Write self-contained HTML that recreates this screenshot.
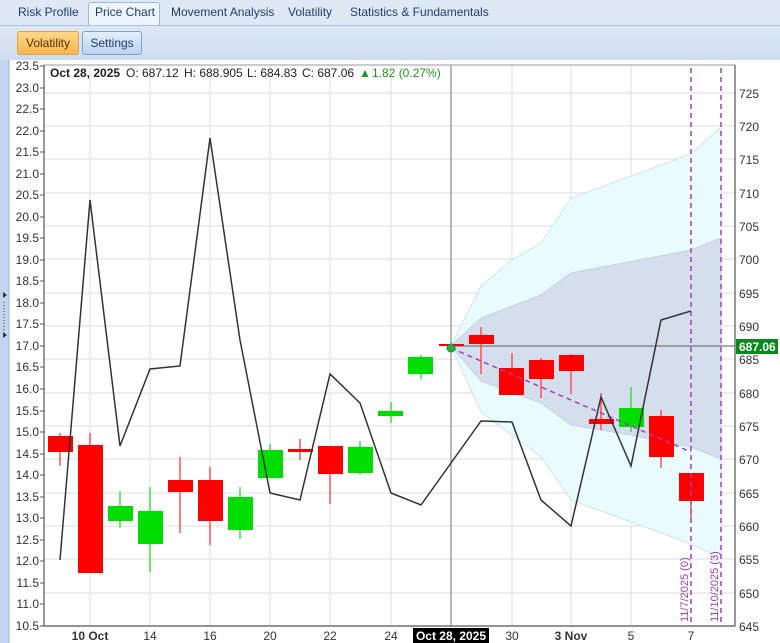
<!DOCTYPE html>
<html><head><meta charset="utf-8"><style>
body{margin:0;width:780px;height:643px;overflow:hidden;background:#dbe6f4;font-family:"Liberation Sans",sans-serif;}
.tabs{position:absolute;left:0;top:0;width:780px;height:26px;background:#dfe9f5;}
.tab{position:absolute;top:5px;font-size:12px;color:#1e3c6e;}
.tabsel{position:absolute;left:88px;top:2px;width:70px;height:25px;background:#eef4fb;border:1px solid #9db7d8;border-bottom:none;border-radius:3px 3px 0 0;}
.tool{position:absolute;left:0;top:25px;width:780px;height:35px;background:linear-gradient(#dde8f5,#cddcee);border-top:1px solid #a9c1df;}
.btn{position:absolute;top:31px;height:22px;font-size:12px;line-height:22px;text-align:center;border-radius:3px;}
</style></head><body>
<div class="tabs"></div>
<div class="tabsel"></div>
<div class="tab" style="left:18px">Risk Profile</div>
<div class="tab" style="left:95px">Price Chart</div>
<div class="tab" style="left:171px">Movement Analysis</div>
<div class="tab" style="left:288px">Volatility</div>
<div class="tab" style="left:350px">Statistics &amp; Fundamentals</div>
<div class="tool"></div>
<div class="btn" style="left:17px;width:60px;background:linear-gradient(#ffd98a,#f7b54f);border:1px solid #e0a050;color:#5a3000">Volatility</div>
<div class="btn" style="left:82px;width:58px;background:linear-gradient(#e3eefb,#bcd3f0);border:1px solid #7ea3d0;color:#1e3c6e">Settings</div>
<svg style="position:absolute;left:0;top:60px" width="780" height="583" viewBox="0 60 780 583" font-family="Liberation Sans, sans-serif">
<rect x="0" y="60" width="780" height="583" fill="#fff"/>
<rect x="0" y="60" width="9" height="583" fill="#c3d5ee"/>
<line x1="9" y1="60" x2="9" y2="643" stroke="#9bb6dc"/>
<path d="M3 292 l4 3 -4 3z M3 332 l4 3 -4 3z" fill="#334"/>
<line x1="4" y1="302" x2="4" y2="330" stroke="#334" stroke-dasharray="1 2"/>
<g stroke="#e4e4e4" stroke-width="1.2">
<line x1="44" y1="93" x2="735" y2="93"/><line x1="44" y1="126" x2="735" y2="126"/><line x1="44" y1="159" x2="735" y2="159"/><line x1="44" y1="193" x2="735" y2="193"/><line x1="44" y1="226" x2="735" y2="226"/><line x1="44" y1="259" x2="735" y2="259"/><line x1="44" y1="293" x2="735" y2="293"/><line x1="44" y1="326" x2="735" y2="326"/><line x1="44" y1="359" x2="735" y2="359"/><line x1="44" y1="393" x2="735" y2="393"/><line x1="44" y1="426" x2="735" y2="426"/><line x1="44" y1="459" x2="735" y2="459"/><line x1="44" y1="493" x2="735" y2="493"/><line x1="44" y1="526" x2="735" y2="526"/><line x1="44" y1="559" x2="735" y2="559"/><line x1="44" y1="593" x2="735" y2="593"/>
<line x1="90" y1="65" x2="90" y2="626"/><line x1="150" y1="65" x2="150" y2="626"/><line x1="210" y1="65" x2="210" y2="626"/><line x1="270" y1="65" x2="270" y2="626"/><line x1="330" y1="65" x2="330" y2="626"/><line x1="391" y1="65" x2="391" y2="626"/><line x1="512" y1="65" x2="512" y2="626"/><line x1="571" y1="65" x2="571" y2="626"/><line x1="631" y1="65" x2="631" y2="626"/>
</g>
<polygon points="451,346 481,286 512,260 541,243 571,198 691,154 721,127 721,558 691,544 631,522 571,500 541,457 481,412" fill="#e9fbfd" stroke="#cfe4f0"/>
<polygon points="451,346 481,318 541,295 571,273 691,250 721,238 721,459 691,447 631,435 571,425 541,403 481,381" fill="#d4deec" stroke="#c5d2e4"/>
<line x1="451" y1="65" x2="451" y2="626" stroke="#888" stroke-width="1.2"/>
<line x1="451" y1="346" x2="735" y2="346" stroke="#777" stroke-width="1.2"/>
<g stroke="#ff3b3b" stroke-width="1.3">
<line x1="60" y1="433" x2="60" y2="466"/><line x1="90" y1="433" x2="90" y2="573"/><line x1="180" y1="457" x2="180" y2="533"/><line x1="210" y1="467" x2="210" y2="545"/><line x1="300" y1="439" x2="300" y2="460"/><line x1="330" y1="446" x2="330" y2="504"/><line x1="481" y1="327" x2="481" y2="374"/><line x1="512" y1="353" x2="512" y2="395"/><line x1="541" y1="358" x2="541" y2="398"/><line x1="571" y1="354" x2="571" y2="394"/><line x1="601" y1="393" x2="601" y2="430"/><line x1="661" y1="410" x2="661" y2="468"/><line x1="691" y1="473" x2="691" y2="518"/>
</g>
<g stroke="#22dd22" stroke-width="1.3">
<line x1="120" y1="491" x2="120" y2="528"/><line x1="150" y1="487" x2="150" y2="572"/><line x1="240" y1="487" x2="240" y2="539"/><line x1="270" y1="444" x2="270" y2="478"/><line x1="360" y1="441" x2="360" y2="475"/><line x1="391" y1="402" x2="391" y2="423"/><line x1="421" y1="355" x2="421" y2="379"/><line x1="631" y1="387" x2="631" y2="432"/>
</g>
<g fill="#ff0000">
<rect x="48" y="436" width="25" height="16"/><rect x="78" y="445" width="25" height="128"/><rect x="168" y="480" width="25" height="12"/><rect x="198" y="480" width="25" height="41"/><rect x="288" y="449" width="25" height="3"/><rect x="318" y="446" width="25" height="28"/><rect x="439" y="344" width="25" height="2"/><rect x="469" y="335" width="25" height="9"/><rect x="499" y="368" width="25" height="27"/><rect x="529" y="360" width="25" height="19"/><rect x="559" y="355" width="25" height="16"/><rect x="589" y="419" width="25" height="5"/><rect x="649" y="416" width="25" height="41"/><rect x="679" y="473" width="25" height="28"/>
</g>
<g fill="#00dd00">
<rect x="108" y="506" width="25" height="15"/><rect x="138" y="511" width="25" height="33"/><rect x="228" y="497" width="25" height="33"/><rect x="258" y="450" width="25" height="28"/><rect x="348" y="447" width="25" height="26"/><rect x="378" y="411" width="25" height="5"/><rect x="408" y="357" width="25" height="17"/><rect x="619" y="408" width="25" height="19"/>
</g>
<line x1="451" y1="348" x2="691" y2="452" stroke="#a040b0" stroke-width="1.5" stroke-dasharray="5 4"/>
<circle cx="451" cy="348" r="4" fill="#3a3" stroke="#185"/>
<polyline points="60,560 90,200 120,446 150,369 180,366 210,138 240,340 270,493 300,500 330,374 360,403 391,493 421,505 481,421 512,422 541,500 571,526 601,397 631,466 661,320 691,311" fill="none" stroke="#333" stroke-width="1.5"/>
<g stroke="#a040b0" stroke-width="1.5" stroke-dasharray="5 4"><line x1="691" y1="68" x2="691" y2="626"/><line x1="721" y1="68" x2="721" y2="626"/></g>
<g fill="#a040b0" font-size="11"><text transform="translate(688,622) rotate(-90)">11/7/2025 (0)</text><text transform="translate(718,622) rotate(-90)">11/10/2025 (3)</text></g>
<rect x="44" y="65" width="691" height="561" fill="none" stroke="#999"/>
<line x1="44" y1="65" x2="44" y2="626" stroke="#555" stroke-width="1.2"/>
<line x1="735" y1="65" x2="735" y2="626" stroke="#555" stroke-width="1.2"/>
<line x1="44" y1="626" x2="735" y2="626" stroke="#555" stroke-width="1.2"/>
<g font-size="12" fill="#333" text-anchor="end">
<text x="39" y="70">23.5</text><text x="39" y="92">23.0</text><text x="39" y="113">22.5</text><text x="39" y="135">22.0</text><text x="39" y="156">21.5</text><text x="39" y="178">21.0</text><text x="39" y="199">20.5</text><text x="39" y="221">20.0</text><text x="39" y="242">19.5</text><text x="39" y="264">19.0</text><text x="39" y="285">18.5</text><text x="39" y="307">18.0</text><text x="39" y="328">17.5</text><text x="39" y="350">17.0</text><text x="39" y="371">16.5</text><text x="39" y="393">16.0</text><text x="39" y="415">15.5</text><text x="39" y="436">15.0</text><text x="39" y="458">14.5</text><text x="39" y="479">14.0</text><text x="39" y="501">13.5</text><text x="39" y="522">13.0</text><text x="39" y="544">12.5</text><text x="39" y="565">12.0</text><text x="39" y="587">11.5</text><text x="39" y="608">11.0</text><text x="39" y="630">10.5</text>
</g>
<g stroke="#555"><path d="M40 66h4M40 88h4M40 109h4M40 131h4M40 152h4M40 174h4M40 195h4M40 217h4M40 238h4M40 260h4M40 281h4M40 303h4M40 324h4M40 346h4M40 367h4M40 389h4M40 411h4M40 432h4M40 454h4M40 475h4M40 497h4M40 518h4M40 540h4M40 561h4M40 583h4M40 604h4M40 626h4"/></g>
<g font-size="12" fill="#333">
<text x="739" y="98">725</text><text x="739" y="131">720</text><text x="739" y="164">715</text><text x="739" y="198">710</text><text x="739" y="231">705</text><text x="739" y="264">700</text><text x="739" y="298">695</text><text x="739" y="331">690</text><text x="739" y="364">685</text><text x="739" y="398">680</text><text x="739" y="431">675</text><text x="739" y="464">670</text><text x="739" y="498">665</text><text x="739" y="531">660</text><text x="739" y="564">655</text><text x="739" y="598">650</text><text x="739" y="631">645</text>
</g>
<rect x="736" y="339" width="42" height="15" fill="#0a8a1a"/>
<text x="739" y="351" font-size="12" font-weight="bold" fill="#fff">687.06</text>
<g font-size="12" fill="#333" text-anchor="middle">
<text x="90" y="640" font-weight="bold">10 Oct</text><text x="150" y="640">14</text><text x="210" y="640">16</text><text x="270" y="640">20</text><text x="330" y="640">22</text><text x="391" y="640">24</text><text x="512" y="640">30</text><text x="571" y="640" font-weight="bold">3 Nov</text><text x="631" y="640">5</text><text x="691" y="640">7</text>
</g>
<rect x="413" y="628" width="76" height="15" fill="#000"/>
<text x="451" y="640" font-size="12" font-weight="bold" fill="#fff" text-anchor="middle">Oct 28, 2025</text>
<g font-size="12" fill="#222">
<text x="50" y="77" font-weight="bold">Oct 28, 2025</text>
<text x="126" y="77">O: 687.12</text>
<text x="184" y="77">H: 688.905</text>
<text x="247" y="77">L: 684.83</text>
<text x="302" y="77">C: 687.06</text>
<text x="359" y="77" fill="#1a9a1a">▲</text>
<text x="372" y="77" fill="#1a9a1a">1.82 (0.27%)</text>
</g>
</svg>
</body></html>
